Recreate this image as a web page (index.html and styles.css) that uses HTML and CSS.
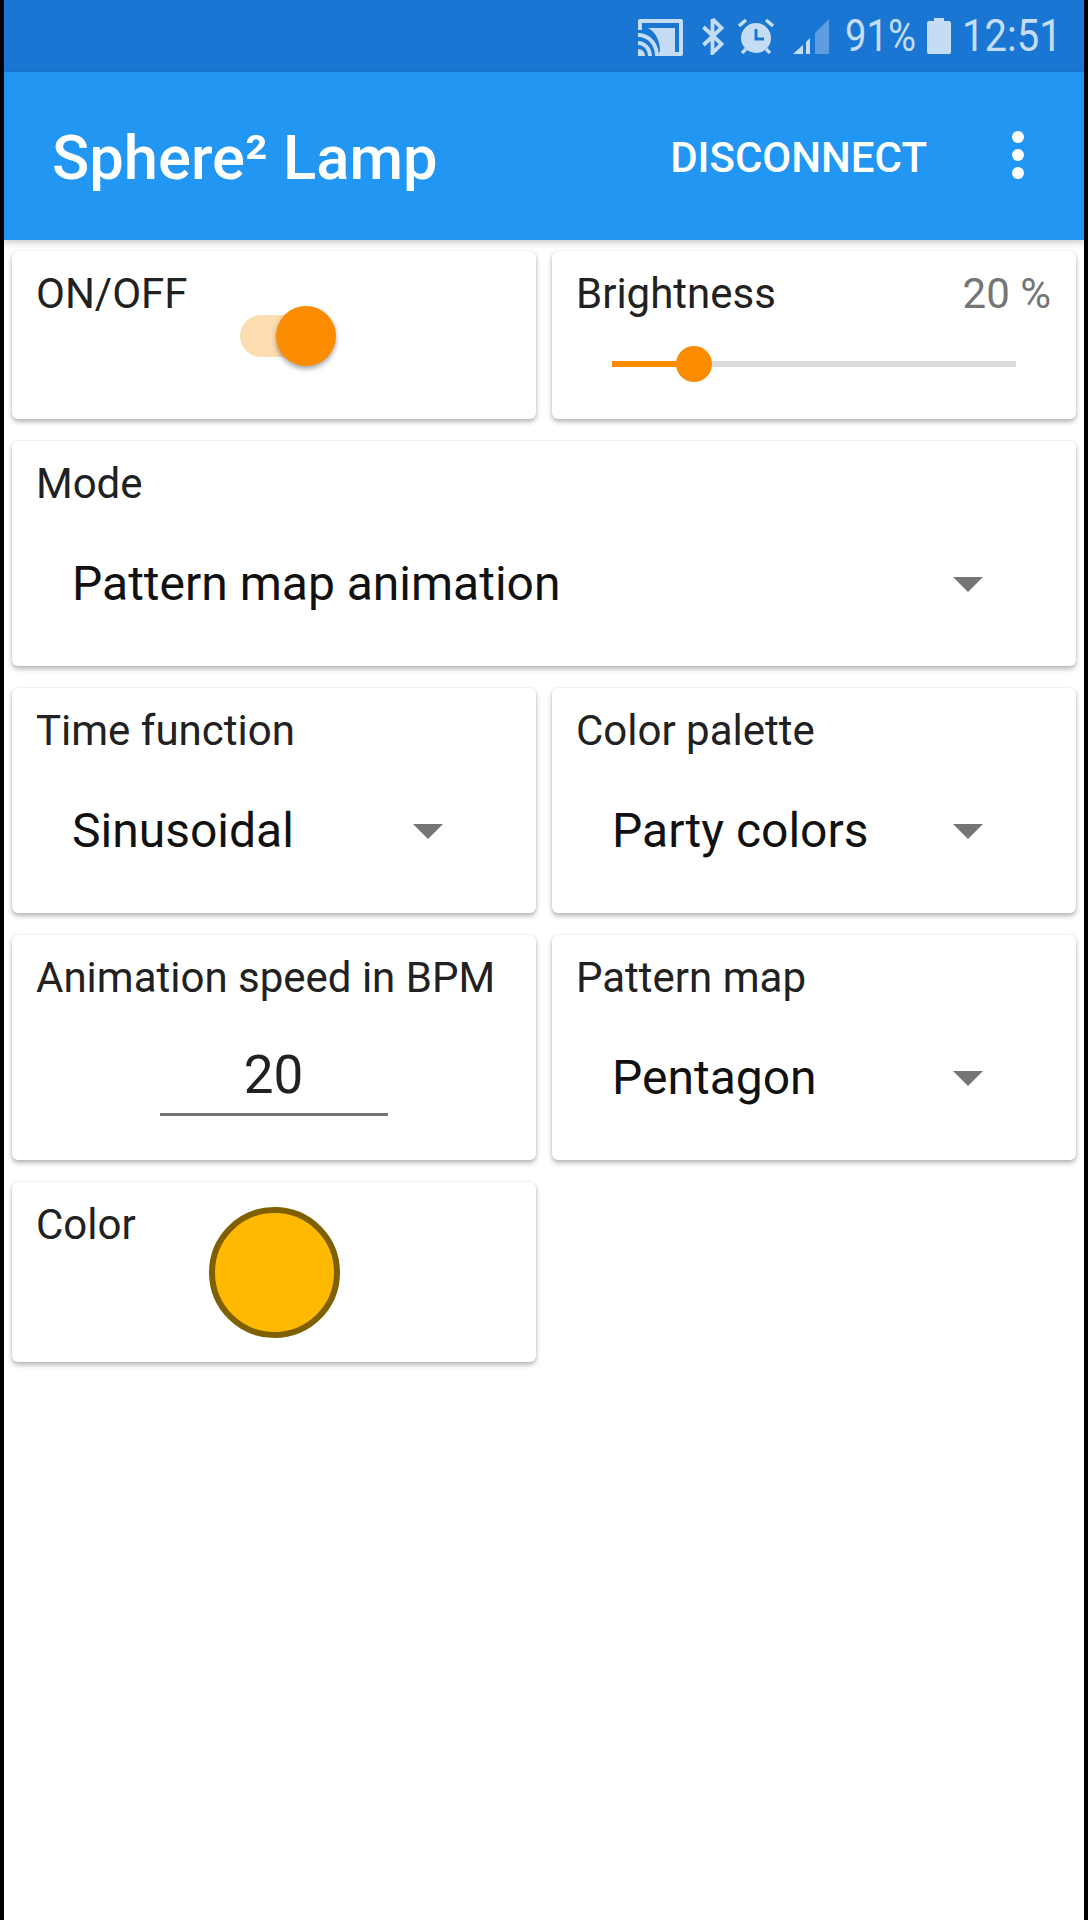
FILE: index.html
```html
<!DOCTYPE html>
<html lang="en">
<head>
	<meta charset="UTF-8">
	<title>Sphere² Lamp</title>
	<link rel="stylesheet" href="styles.css">
</head>
<body>
	<div class="app">
		<div class="status">
			<svg class="ic-cast" width="47" height="39" viewBox="0 0 47 39">
				<path d="M1 13V4q0-2 2-2h41q2 0 2 2v33q0 2-2 2H22v-4h20V6H5v7z" fill="#c5dcf5"/>
				<path d="M11 11h27v24H23C23 24 19 15 11 11z" fill="#c5dcf5"/>
				<path d="M1 16c12 0 21 10 21 23h-4C18 28 11 20 1 20zM1 24c8 0 14 7 14 15h-4c0-6-4-11-10-11zM1 32c4 0 7 3 7 7H1z" fill="#c5dcf5"/>
			</svg>
			<svg class="ic-bt" width="23" height="38" viewBox="0 0 23 38">
				<path d="M11.5 2v34l9-9-18-17M11.5 2l9 9-18 17" fill="none" stroke="#c5dcf5" stroke-width="3.8"/>
			</svg>
			<svg class="ic-alarm" width="36" height="36" viewBox="0 0 36 36">
				<circle cx="18" cy="20" r="15" fill="#c5dcf5"/>
				<path d="M18 11v10h8" fill="none" stroke="#1976d2" stroke-width="3"/>
				<path d="M1 8l7-6M35 8l-7-6M4 35l4-4M32 35l-4-4" fill="none" stroke="#c5dcf5" stroke-width="3.4"/>
			</svg>
			<svg class="ic-signal" width="36" height="36" viewBox="0 0 36 36">
				<path d="M0 36l10-9v9z" fill="#c5dcf5"/>
				<path d="M13 24l4-4v16h-4z" fill="#c5dcf5"/>
				<path d="M22 15l14-14v35H22z" fill="#c5dcf5" opacity=".4"/>
			</svg>
			<span class="st-text st-pct">91%</span>
			<svg class="ic-bat" width="24" height="36" viewBox="0 0 24 36">
				<path d="M7 0h10v3h5q2 0 2 2v29q0 2-2 2H2q-2 0-2-2V5q0-2 2-2h5z" fill="#c5dcf5"/>
			</svg>
			<span class="st-text st-time">12:51</span>
		</div>
		<div class="bar">
			<div class="bar-title">Sphere² Lamp</div>
			<div class="bar-btn">DISCONNECT</div>
			<div class="dots"><i></i><i></i><i></i></div>
		</div>
		<div class="grid">
			<div class="card h-s stack">
				<div class="label">ON/OFF</div>
				<div class="switch">
					<div class="sw-track"></div>
					<div class="sw-knob"></div>
				</div>
			</div>
			<div class="card h-s">
				<div class="head">
					<div class="label">Brightness</div>
					<div class="value">20 %</div>
				</div>
				<div class="slider">
					<div class="sl-fill" style="width:20%"></div>
					<div class="sl-knob" style="left:20%"></div>
				</div>
			</div>
			<div class="card h-m wide">
				<div class="label">Mode</div>
				<div class="select"><span>Pattern map animation</span><i class="arrow"></i></div>
			</div>
			<div class="card h-m">
				<div class="label">Time function</div>
				<div class="select"><span>Sinusoidal</span><i class="arrow"></i></div>
			</div>
			<div class="card h-m">
				<div class="label">Color palette</div>
				<div class="select"><span>Party colors</span><i class="arrow"></i></div>
			</div>
			<div class="card h-m">
				<div class="label">Animation speed in BPM</div>
				<div class="number">20</div>
			</div>
			<div class="card h-m">
				<div class="label">Pattern map</div>
				<div class="select"><span>Pentagon</span><i class="arrow"></i></div>
			</div>
			<div class="card h-l stack">
				<div class="label">Color</div>
				<div class="swatch"></div>
			</div>
		</div>
	</div>
</body>
</html>
```

FILE: styles.css
```css
*{box-sizing:border-box;}
html,body{margin:0;padding:0;}
body{background:#000;padding:0 4px;font-family:Roboto,"Liberation Sans",sans-serif;}
.app{width:1080px;height:1920px;background:#fff;}

.status{height:72px;background:#1976d2;display:flex;align-items:center;justify-content:flex-end;padding-right:28px;color:#c5dcf5;}
.status svg{display:block;flex:none;}
.ic-cast{margin-right:17px;}
.ic-bt{margin-right:14px;}
.ic-alarm{margin-right:19px;}
.ic-signal{margin-right:16px;}
.ic-bat{margin-right:11px;}
.st-text{font-size:45px;line-height:72px;display:block;transform-origin:left center;}
.st-pct{width:69px;margin-right:13px;transform:scaleX(.85);}
.st-time{width:94px;transform:scaleX(.89);}

.bar{height:168px;background:#2196f3;display:flex;align-items:center;color:#fff;padding:0 0 0 48px;box-shadow:0 3px 6px rgba(0,0,0,.2);position:relative;}
.bar-title{font-size:61.5px;font-weight:500;flex:1;margin-top:4px;}
.bar-btn{font-size:42px;font-weight:500;margin-right:85px;margin-top:2px;}
.dots{width:12px;margin-right:60px;display:flex;flex-direction:column;gap:6px;margin-top:-3px;}
.dots i{display:block;width:12px;height:12px;border-radius:50%;background:#fff;}

.grid{display:grid;grid-template-columns:524px 524px;column-gap:16px;row-gap:22px;padding:11px 8px 0;align-items:start;}
.card{background:#fff;border-radius:6px;box-shadow:0 3px 5px rgba(0,0,0,.28),0 0 2px rgba(0,0,0,.12);padding:17px 25px 0 24px;}
.wide{grid-column:1 / 3;}
.h-s{height:168px;}
.h-m{height:225px;}
.h-l{height:180px;}
.stack{display:grid;grid-template-columns:1fr;grid-template-rows:auto;align-content:start;}
.stack > *{grid-area:1 / 1;}

.label{font-size:42px;line-height:52px;color:#212121;white-space:nowrap;}
.head{display:flex;justify-content:space-between;}
.value{font-size:42px;line-height:52px;color:#757575;}

.switch{position:relative;width:96px;height:60px;margin-top:38px;margin-left:204px;}
.sw-track{width:84px;height:42px;margin-top:9px;border-radius:21px;background:#fddcb2;}
.sw-knob{position:absolute;left:36px;top:0;width:60px;height:60px;border-radius:50%;background:#fb8c00;box-shadow:0 3px 5px rgba(0,0,0,.35);}

.slider{position:relative;width:404px;height:6px;background:#dcdcdc;margin:41px 0 0 36px;}
.sl-fill{height:6px;background:#fb8c00;}
.sl-knob{position:absolute;top:-15px;width:36px;height:36px;margin-left:-17px;border-radius:50%;background:#fb8c00;}

.select{display:flex;align-items:center;justify-content:space-between;font-size:48px;line-height:56px;color:#111;margin-top:46px;padding:0 68px 0 36px;}
.arrow{display:block;width:0;height:0;border-style:solid;border-width:15px 15px 0;border-color:#757575 transparent transparent;}

.number{width:228px;margin:34px auto 0;text-align:center;font-size:53px;line-height:75px;color:#212121;border-bottom:3px solid #757575;}
.swatch{width:131px;height:131px;border-radius:50%;background:#ffb900;border:6px solid #7f6000;justify-self:center;margin:8px 0 0 1px;}
```
